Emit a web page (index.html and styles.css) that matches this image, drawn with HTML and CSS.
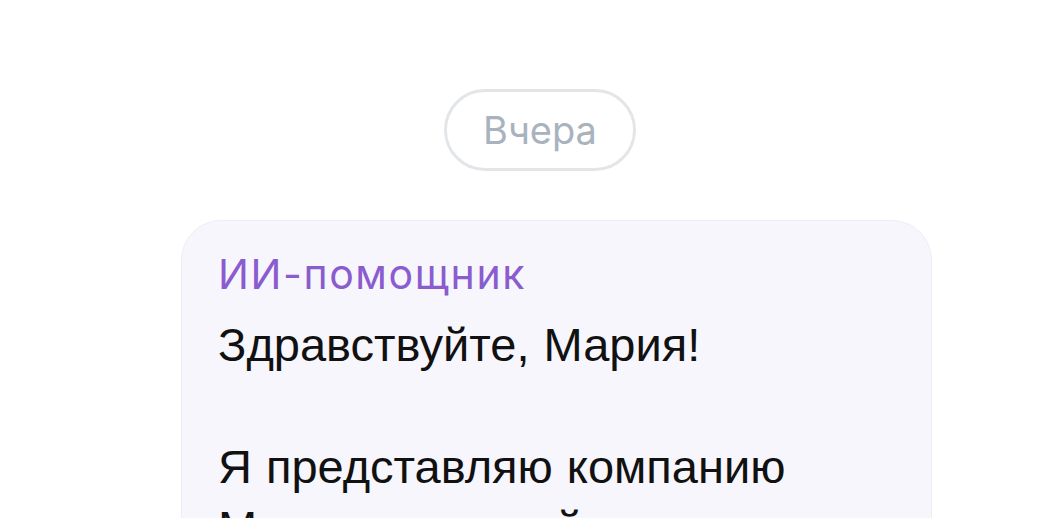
FILE: index.html
```html
<!DOCTYPE html>
<html lang="ru">
<head>
<meta charset="utf-8">
<link rel="stylesheet" href="styles.css">
</head>
<body>
<main class="chat">
  <div class="date-pill">Вчера</div>
  <section class="message">
    <div class="author">ИИ-помощник</div>
    <p class="text">Здравствуйте, Мария!<br><br>Я представляю компанию Международный аэропорт «Пулково» и хочу рассказать вам о новых услугах.</p>
  </section>
</main>
</body>
</html>
```
FILE: styles.css
```css
html, body {
  margin: 0;
  padding: 0;
  background: #ffffff;
  overflow: hidden;
}
body {
  width: 1043px;
  height: 518px;
  font-family: Inter, "Noto Sans", sans-serif;
}
.chat {
  display: flex;
  flex-direction: column;
  align-items: center;
  padding: 89px 0 0 37px;
}
.date-pill {
  box-sizing: border-box;
  height: 82px;
  padding: 0 36px;
  border: 3px solid #e3e6e9;
  border-radius: 41px;
  color: #a8b3bd;
  font-size: 38px;
  line-height: 76px;
  letter-spacing: 0;
}
.message {
  align-self: flex-start;
  box-sizing: border-box;
  width: 751px;
  margin: 49px 0 0 144px;
  padding: 27px 36px 0 36px;
  background: #f7f6fc;
  border: 1px solid #efedf6;
  border-radius: 40px;
}
.author {
  color: #8a5ccf;
  font-size: 41px;
  line-height: 52px;
  letter-spacing: 1.6px;
}
.text {
  margin: 14px 0 0 0;
  color: #111111;
  font-family: "Liberation Sans", Arial, sans-serif;
  font-size: 47px;
  line-height: 61px;
  word-spacing: 1px;
}
```
